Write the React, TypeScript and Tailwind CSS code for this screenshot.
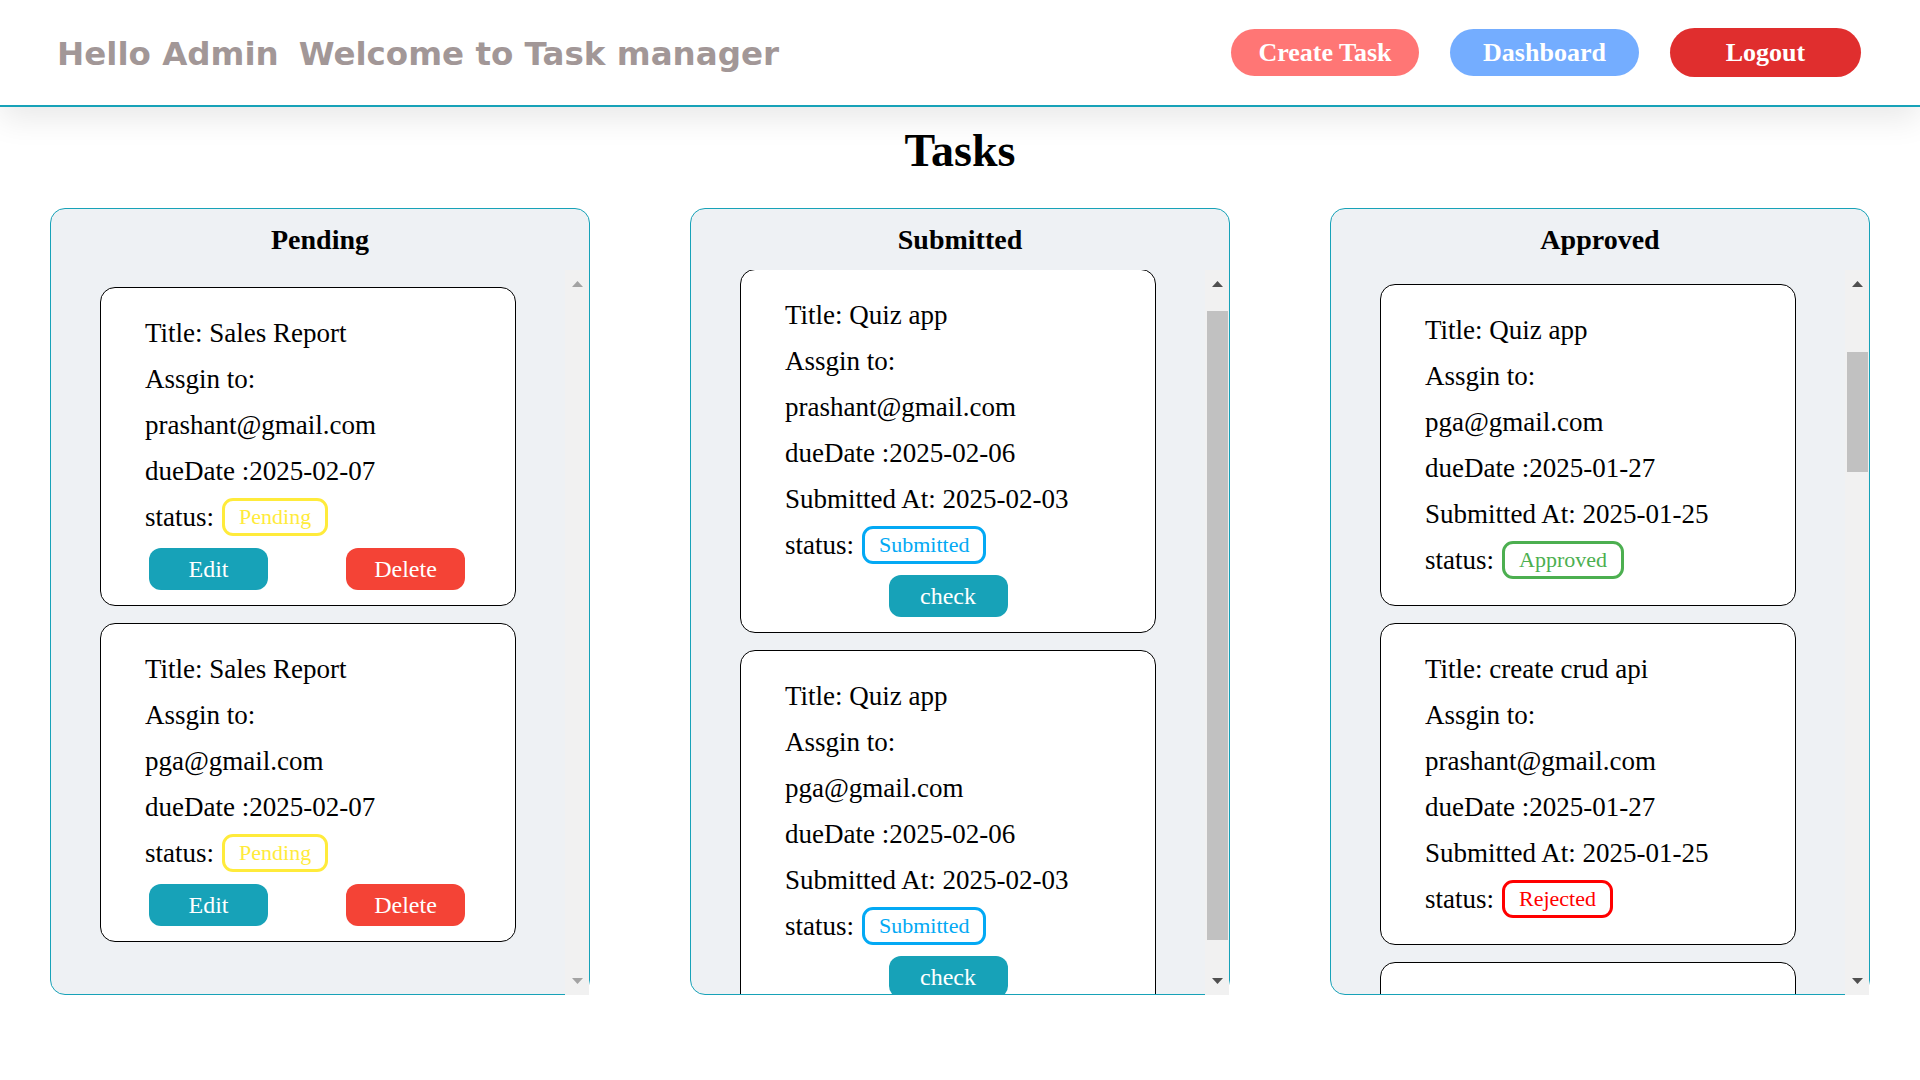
import { useEffect, useRef, type ReactNode } from "react";

type Status = "Pending" | "Submitted" | "Approved" | "Rejected";

type Task = {
  title: string;
  email: string;
  due: string;
  submittedAt?: string;
  status: Status;
};

const badgeColors: Record<Status, string> = {
  Pending: "border-[#ffeb3b] text-[#ffeb3b]",
  Submitted: "border-[#03a9f4] text-[#03a9f4]",
  Approved: "border-[#4caf50] text-[#4caf50]",
  Rejected: "border-[#ff0000] text-[#ff0000]",
};

const pendingTasks: Task[] = [
  { title: "Sales Report", email: "prashant@gmail.com", due: "2025-02-07", status: "Pending" },
  { title: "Sales Report", email: "pga@gmail.com", due: "2025-02-07", status: "Pending" },
];

const submittedTasks: Task[] = [
  { title: "Quiz app", email: "prashant@gmail.com", due: "2025-02-06", submittedAt: "2025-02-03", status: "Submitted" },
  { title: "Quiz app", email: "pga@gmail.com", due: "2025-02-06", submittedAt: "2025-02-03", status: "Submitted" },
];

const reviewedTasks: Task[] = [
  { title: "Sales Report", email: "prashant@gmail.com", due: "2025-01-30", submittedAt: "2025-01-28", status: "Approved" },
  { title: "Quiz app", email: "pga@gmail.com", due: "2025-01-27", submittedAt: "2025-01-25", status: "Approved" },
  { title: "create crud api", email: "prashant@gmail.com", due: "2025-01-27", submittedAt: "2025-01-25", status: "Rejected" },
  { title: "Login page", email: "pga@gmail.com", due: "2025-01-26", submittedAt: "2025-01-24", status: "Approved" },
  { title: "Landing page", email: "prashant@gmail.com", due: "2025-01-25", submittedAt: "2025-01-23", status: "Approved" },
  { title: "Todo app", email: "pga@gmail.com", due: "2025-01-24", submittedAt: "2025-01-22", status: "Rejected" },
  { title: "Weather app", email: "prashant@gmail.com", due: "2025-01-23", submittedAt: "2025-01-21", status: "Approved" },
  { title: "Blog api", email: "pga@gmail.com", due: "2025-01-22", submittedAt: "2025-01-20", status: "Approved" },
  { title: "Chat app", email: "prashant@gmail.com", due: "2025-01-21", submittedAt: "2025-01-19", status: "Approved" },
  { title: "Portfolio", email: "pga@gmail.com", due: "2025-01-20", submittedAt: "2025-01-18", status: "Rejected" },
  { title: "Sales Report", email: "prashant@gmail.com", due: "2025-01-19", submittedAt: "2025-01-17", status: "Approved" },
  { title: "Quiz app", email: "pga@gmail.com", due: "2025-01-18", submittedAt: "2025-01-16", status: "Approved" },
];

function TaskCard({ task, kind }: { task: Task; kind: "pending" | "submitted" | "reviewed" }) {
  return (
    <div
      className={`w-[416px] ml-[49px] mb-[17px] bg-white border border-black rounded-[15px] pt-[22px] ${
        kind === "reviewed" ? "pb-[22px]" : "pb-[15px]"
      }`}
    >
      <div className="pl-[44px] text-[27px] leading-[46px] text-black">
        <p>Title: {task.title}</p>
        <p>Assgin to:</p>
        <p>{task.email}</p>
        <p>dueDate :{task.due}</p>
        {task.submittedAt && <p>Submitted At: {task.submittedAt}</p>}
        <div className="flex items-center h-[46px]">
          <span>status:</span>
          <span
            className={`ml-[8px] h-[38px] px-[14px] border-[3px] rounded-[11px] text-[22px] leading-[32px] ${badgeColors[task.status]}`}
          >
            {task.status}
          </span>
        </div>
      </div>

      {kind === "pending" && (
        <div className="flex justify-between pl-[48px] pr-[50px] mt-[8px]">
          <button className="w-[119px] h-[42px] rounded-[12px] bg-[#17a2b8] text-white text-[24px]">Edit</button>
          <button className="w-[119px] h-[42px] rounded-[12px] bg-[#f44336] text-white text-[24px]">Delete</button>
        </div>
      )}
      {kind === "submitted" && (
        <div className="flex justify-center mt-[7px]">
          <button className="w-[119px] h-[42px] rounded-[12px] bg-[#17a2b8] text-white text-[24px]">check</button>
        </div>
      )}
    </div>
  );
}

// scrollbar drawn next to the list (thumb = null when nothing overflows)
function ScrollBar({ thumb }: { thumb: { top: number; height: number } | null }) {
  const arrow = thumb ? "#505050" : "#a3a3a3";
  return (
    <div className="w-[24px] shrink-0 -mb-[1px] bg-[#f1f1f1] flex flex-col">
      <div className="h-[28px] flex items-center justify-center">
        <svg width="11" height="6" viewBox="0 0 11 6">
          <polygon points="5.5,0 11,6 0,6" fill={arrow} />
        </svg>
      </div>
      <div className="flex-1">
        {thumb && <div className="w-[21px] ml-[2px] bg-[#c1c1c1]" style={{ marginTop: thumb.top, height: thumb.height }} />}
      </div>
      <div className="h-[28px] flex items-center justify-center">
        <svg width="11" height="6" viewBox="0 0 11 6">
          <polygon points="0,0 11,0 5.5,6" fill={arrow} />
        </svg>
      </div>
    </div>
  );
}

function Column({
  title,
  scrollTop,
  thumb,
  children,
}: {
  title: string;
  scrollTop: number;
  thumb: { top: number; height: number } | null;
  children: ReactNode;
}) {
  const listRef = useRef<HTMLDivElement>(null);

  useEffect(() => {
    if (listRef.current) listRef.current.scrollTop = scrollTop;
  }, [scrollTop]);

  return (
    <section className="w-[540px] h-[787px] flex flex-col bg-[#eef1f4] border border-[#17a2b8] rounded-[15px]">
      <h2 className="h-[61px] shrink-0 flex items-center justify-center text-[28px] font-bold text-black">{title}</h2>
      <div className="flex-1 min-h-0 flex">
        <div ref={listRef} className="flex-1 min-w-0 overflow-hidden pt-[17px]">
          {children}
        </div>
        <ScrollBar thumb={thumb} />
      </div>
    </section>
  );
}

export default function App() {
  return (
    <div className="min-h-[1080px] bg-white font-['Liberation_Serif','Times_New_Roman',serif]">
      {/* Navbar */}
      <header className="relative z-10 h-[107px] flex items-center justify-between pl-[57px] pr-[59px] bg-white border-b-2 border-[#17a2b8] shadow-[0_12px_30px_rgba(0,0,0,0.09)]">
        <h1 className="mt-[4px] flex gap-[20px] text-[32.5px] font-bold text-[#a29797] font-['Comic_Sans_MS','DejaVu_Sans',cursive]">
          <span>Hello Admin</span>
          <span>Welcome to Task manager</span>
        </h1>
        <nav className="flex items-center gap-[31px] font-bold text-[26px] text-white">
          <button className="w-[188px] h-[47px] rounded-full bg-[#ff7675]">Create Task</button>
          <button className="w-[189px] h-[47px] rounded-full bg-[#74adff]">Dashboard</button>
          <button className="w-[191px] h-[49px] rounded-full bg-[#e02e2e]">Logout</button>
        </nav>
      </header>

      <main className="pt-[17px]">
        <h1 className="text-center text-[46px] leading-[53px] font-bold text-black mb-[31px]">Tasks</h1>

        <div className="flex justify-around">
          <Column title="Pending" scrollTop={0} thumb={null}>
            {pendingTasks.map((t, i) => (
              <TaskCard key={i} task={t} kind="pending" />
            ))}
          </Column>
          <Column title="Submitted" scrollTop={18} thumb={{ top: 13, height: 629 }}>
            {submittedTasks.map((t, i) => (
              <TaskCard key={i} task={t} kind="submitted" />
            ))}
          </Column>
          <Column title="Approved" scrollTop={342} thumb={{ top: 54, height: 120 }}>
            {reviewedTasks.map((t, i) => (
              <TaskCard key={i} task={t} kind="reviewed" />
            ))}
          </Column>
        </div>
      </main>
    </div>
  );
}
